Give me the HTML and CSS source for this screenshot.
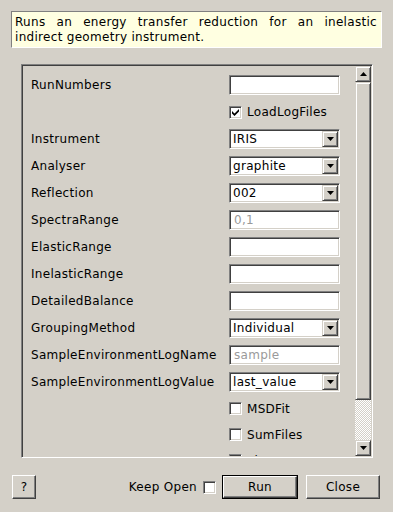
FILE: index.html
```html
<!DOCTYPE html>
<html>
<head>
<meta charset="utf-8">
<link rel="stylesheet" href="styles.css">
</head>
<body>
<div class="desc">Runs an energy transfer reduction for an inelastic indirect geometry instrument.</div>
<div class="frame">
  <div class="viewport">
    <div class="form">
      <div class="row"><span class="lbl">RunNumbers</span><span class="field"></span></div>
      <div class="row"><span class="lbl"></span><span class="check on"><svg width="9" height="9" viewBox="0 0 9 9"><path d="M1 3 L3.5 5.5 L8 1 L8 3.5 L3.5 8 L1 5.5 Z" fill="#000"/></svg></span><span class="cblbl">LoadLogFiles</span></div>
      <div class="row"><span class="lbl">Instrument</span><span class="field combo"><span class="val">IRIS</span><span class="arrow"><svg width="7" height="4" viewBox="0 0 7 4"><path d="M0 0 H7 L3.5 4 Z" fill="#000"/></svg></span></span></div>
      <div class="row"><span class="lbl">Analyser</span><span class="field combo"><span class="val">graphite</span><span class="arrow"><svg width="7" height="4" viewBox="0 0 7 4"><path d="M0 0 H7 L3.5 4 Z" fill="#000"/></svg></span></span></div>
      <div class="row"><span class="lbl">Reflection</span><span class="field combo"><span class="val">002</span><span class="arrow"><svg width="7" height="4" viewBox="0 0 7 4"><path d="M0 0 H7 L3.5 4 Z" fill="#000"/></svg></span></span></div>
      <div class="row"><span class="lbl">SpectraRange</span><span class="field dis">0,1</span></div>
      <div class="row"><span class="lbl">ElasticRange</span><span class="field"></span></div>
      <div class="row"><span class="lbl">InelasticRange</span><span class="field"></span></div>
      <div class="row"><span class="lbl">DetailedBalance</span><span class="field"></span></div>
      <div class="row"><span class="lbl">GroupingMethod</span><span class="field combo"><span class="val">Individual</span><span class="arrow"><svg width="7" height="4" viewBox="0 0 7 4"><path d="M0 0 H7 L3.5 4 Z" fill="#000"/></svg></span></span></div>
      <div class="row"><span class="lbl">SampleEnvironmentLogName</span><span class="field dis">sample</span></div>
      <div class="row"><span class="lbl">SampleEnvironmentLogValue</span><span class="field combo"><span class="val">last_value</span><span class="arrow"><svg width="7" height="4" viewBox="0 0 7 4"><path d="M0 0 H7 L3.5 4 Z" fill="#000"/></svg></span></span></div>
      <div class="row short"><span class="lbl"></span><span class="check"></span><span class="cblbl">MSDFit</span></div>
      <div class="row short"><span class="lbl"></span><span class="check"></span><span class="cblbl">SumFiles</span></div>
      <div class="row short"><span class="lbl"></span><span class="check"></span><span class="cblbl">Plot</span></div>
    </div>
  </div>
  <div class="vscroll">
    <div class="sbtn"><svg width="7" height="4" viewBox="0 0 7 4"><path d="M3.5 0 L7 4 H0 Z" fill="#000"/></svg></div>
    <div class="track"><div class="thumb"></div></div>
    <div class="sbtn"><svg width="7" height="4" viewBox="0 0 7 4"><path d="M0 0 H7 L3.5 4 Z" fill="#000"/></svg></div>
  </div>
</div>
<div class="bar">
  <span class="btn help">?</span>
  <span class="spacer"></span>
  <span class="keep">Keep Open</span>
  <span class="check"></span>
  <span class="btn run"><span class="btn-in">Run</span></span>
  <span class="btn close">Close</span>
</div>
</body>
</html>
```
FILE: styles.css
```css
html, body {
  margin: 0;
  padding: 0;
}
body {
  width: 393px;
  height: 512px;
  background: #d4d0c8;
  font-family: "DejaVu Sans", sans-serif;
  font-size: 12px;
  letter-spacing: 0.3px;
  color: #000;
  overflow: hidden;
}
.desc {
  box-sizing: border-box;
  margin: 11px 11px 0 11px;
  width: 371px;
  height: 37px;
  padding: 3px 4px 0 3px;
  line-height: 15px;
  background: #ffffe1;
  border: 1px solid;
  border-color: #808080 #ffffff #ffffff #808080;
  text-align: justify;
}
.frame {
  box-sizing: border-box;
  margin: 16px 0 0 21px;
  width: 352px;
  height: 394px;
  border: 1px solid;
  border-color: #808080 #ffffff #ffffff #808080;
  box-shadow: inset 1px 1px #404040, inset -1px -1px #d4d0c8;
  padding: 1px;
  display: flex;
}
.viewport {
  flex: 1;
  overflow: hidden;
  height: 390px;
}
.form {
  display: flex;
  flex-direction: column;
  gap: 7px;
  padding: 9px 0 0 8px;
}
.row {
  display: flex;
  align-items: center;
  height: 20px;
  flex-shrink: 0;
}
.row.short {
  height: 19px;
}
.lbl {
  width: 198px;
  flex-shrink: 0;
  white-space: nowrap;
}
.field {
  box-sizing: border-box;
  width: 111px;
  height: 20px;
  background: #fff;
  border: 1px solid;
  border-color: #808080 #ffffff #ffffff #808080;
  box-shadow: inset 1px 1px #404040, inset -1px -1px #d4d0c8;
  padding: 0 3px;
  display: flex;
  align-items: center;
  white-space: nowrap;
}
.field.dis {
  color: #9a9a9a;
  padding-left: 4px;
}
.field.combo {
  padding: 1px;
}
.val {
  flex: 1;
  padding-left: 2px;
}
.arrow {
  box-sizing: border-box;
  width: 16px;
  height: 16px;
  background: #d4d0c8;
  border: 1px solid;
  border-color: #d4d0c8 #404040 #404040 #d4d0c8;
  box-shadow: inset 1px 1px #fff, inset -1px -1px #808080;
  display: flex;
  align-items: center;
  justify-content: center;
}
.check {
  box-sizing: border-box;
  width: 13px;
  height: 13px;
  flex-shrink: 0;
  background: #fff;
  border: 1px solid;
  border-color: #808080 #ffffff #ffffff #808080;
  box-shadow: inset 1px 1px #404040, inset -1px -1px #d4d0c8;
  display: flex;
  align-items: center;
  justify-content: center;
}
.check svg {
  display: block;
}
.cblbl {
  margin-left: 5px;
  white-space: nowrap;
}
.vscroll {
  width: 16px;
  height: 390px;
  display: flex;
  flex-direction: column;
}
.sbtn {
  box-sizing: border-box;
  width: 16px;
  height: 16px;
  background: #d4d0c8;
  border: 1px solid;
  border-color: #d4d0c8 #404040 #404040 #d4d0c8;
  box-shadow: inset 1px 1px #fff, inset -1px -1px #808080;
  display: flex;
  align-items: center;
  justify-content: center;
}
.track {
  flex: 1;
  background: repeating-conic-gradient(#ffffff 0 25%, #d4d0c8 0 50%) 0 0 / 2px 2px;
}
.thumb {
  box-sizing: border-box;
  height: 318px;
  background: #d4d0c8;
  border: 1px solid;
  border-color: #d4d0c8 #404040 #404040 #d4d0c8;
  box-shadow: inset 1px 1px #fff, inset -1px -1px #808080;
}
.bar {
  display: flex;
  align-items: center;
  margin-top: 17px;
  padding: 0 13px 0 12px;
  height: 24px;
}
.spacer {
  flex: 1;
}
.btn {
  box-sizing: border-box;
  height: 24px;
  background: #d4d0c8;
  border: 1px solid;
  border-color: #ffffff #404040 #404040 #ffffff;
  box-shadow: inset -1px -1px #808080;
  display: flex;
  align-items: center;
  justify-content: center;
}
.help {
  width: 24px;
}
.keep {
  margin-right: 6px;
}
.run {
  width: 76px;
  margin-left: 6px;
  border: 1px solid #000;
  box-shadow: none;
  padding: 0;
}
.btn-in {
  box-sizing: border-box;
  width: 100%;
  height: 100%;
  border: 1px solid;
  border-color: #ffffff #404040 #404040 #ffffff;
  box-shadow: inset -1px -1px #808080;
  display: flex;
  align-items: center;
  justify-content: center;
}
.close {
  width: 74px;
  margin-left: 8px;
}
```
